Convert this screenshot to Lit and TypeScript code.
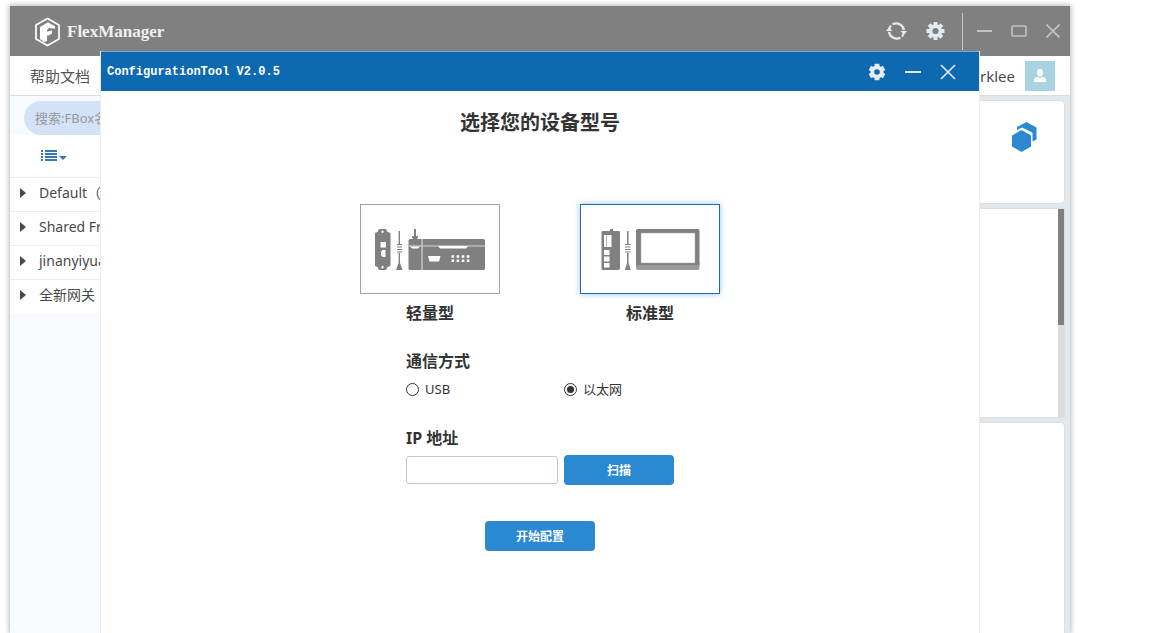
import { LitElement, html, css, svg } from "lit";
import { customElement, state } from "lit/decorators.js";

const gear = svg`<circle cx="9" cy="9" r="4.900" fill="none" stroke="currentColor" stroke-width="3.600"/>
  <path d="M9 0v4M9 14v4M0 9h4M14 9h4M2.600 2.600l2.800 2.800M12.600 12.600l2.800 2.800M2.600 15.400l2.800-2.800M12.600 5.400l2.800-2.800" stroke="currentColor" stroke-width="4"/>`;

const gearSix = svg`<circle cx="9" cy="9" r="4.700" fill="none" stroke="currentColor" stroke-width="3.800"/>
  <path d="M9 .8v3M9 14.200v3M1.900 4.900l2.600 1.500M13.500 11.600l2.600 1.500M1.900 13.100l2.600-1.500M13.500 6.400l2.600-1.500" stroke="currentColor" stroke-width="4.800"/>`;

const compactArt = html`<svg class="art" width="138" height="88" viewBox="361 205 138 88" aria-hidden="true">
  <g fill="#808080">
    <path fill-rule="evenodd" d="M379 229h7l1.500 3 3 1v33l-3 1-1.500 3h-7l-1.500-3-2.500-1v-33l2.500-1zM380.500 242v5.500h5.500V242zM382.500 250l-1.500 2v3l1.500 2h3v-7zM382.500 230.500a1.200 1.200 0 1 0 .1 0zM382.500 266a1.200 1.200 0 1 0 .1 0z"/>
    <path d="M398.600 231h1.400v13h-1.400zM398.600 253h1.400v10l2.500 7h-6.500l2.600-7zM397 244h5v1h-5zM397 246.500h5v1h-5zM397 249h5v1h-5zM397 251.500h5v1h-5z"/>
    <path d="M414 229h2v7h2v1.500l-1.500 2h-3l-1.500-2V236h2z"/>
    <rect x="408.500" y="239" width="76.500" height="31" rx="1.500"/>
  </g>
  <path d="M409 246h76M422 239v31" stroke="#d5d5d5" stroke-width="1.200"/>
  <path fill="#fff" d="M410 246.500h10l-2 2h-6zM438 246h30l-2 2.500h-26zM428 256h12.500l-1.500 5.500h-9.500z"/>
  <path d="M451.500 256.500h18M451.500 260.700h18" stroke="#fff" stroke-width="2.400" stroke-dasharray="2.600 2.500"/>
</svg>`;

const standardArt = html`<svg class="art" width="138" height="88" viewBox="581 205 138 88" aria-hidden="true">
  <path fill="#808080" d="M610 229h3v2h6a1 1 0 0 1 1 1v36a2 2 0 0 1-2 2h-15a1.500 1.500 0 0 1-1.500-1.500V232a1 1 0 0 1 1-1h7.500z"/>
  <path fill="#fff" d="M604 235h2v12h-2zM607 235h4.500v12H607zM604 250h5.500v5H604zM604 256.500h5.500v5H604zM604 263h5.500v4.500H604z"/>
  <path fill="#bbb" d="M606 235h1v12h-1z"/>
  <path fill="#858585" d="M627 231h1.600v13H627zM627 253h1.600v10l2.200 7h-6l2.200-7zM625 244h5.500v1H625zM625 246.500h5.500v1H625zM625 249h5.500v1H625zM625 251.500h5.500v1H625z"/>
  <path fill="#999" d="M636 262h63.500v6a2 2 0 0 1-2 2h-59.500a2 2 0 0 1-2-2z"/>
  <path fill="#808080" d="M638 229h59.500a2 2 0 0 1 2 2v34H636v-34a2 2 0 0 1 2-2z"/>
  <path fill="#fff" stroke="#aaa" stroke-width=".5" d="M641 233h54v30h-54z"/>
</svg>`;

@customElement("app-root")
export class AppRoot extends LitElement {
  static styles = css`
    :host {
      display: block;
      height: 100vh;
      overflow: hidden;
      background: #fff;
      color: #4a4a4a;
      font-family: "Noto Sans", "Noto Sans CJK SC", sans-serif;
    }
    * { box-sizing: border-box; }
    button { font-family: inherit; padding: 0; border: 0; background: none; color: inherit; cursor: pointer; }
    svg { display: block; }
    h1, ul, fieldset { margin: 0; padding: 0; border: 0; list-style: none; }
    .stage { height: 100%; padding: 6px 103px 0 10px; }
    .window {
      position: relative;
      display: flex;
      flex-direction: column;
      height: 100%;
      background: #fff;
      box-shadow: 0 0 5px 1px rgba(0, 0, 0, 0.28);
    }
    .titlebar {
      display: flex;
      align-items: center;
      flex: none;
      height: 50px;
      padding: 0 10px 0 24px;
      background: #808080;
      color: #fff;
    }
    .brand {
      display: flex;
      align-items: center;
      gap: 6px;
      flex: 1;
      padding-top: 1px;
      color: #f0f0f0;
      font: bold 17px "Liberation Serif", serif;
    }
    .actions { display: flex; align-items: center; gap: 19px; }
    .actions button { color: #e3eaf0; }
    .rule { width: 1px; height: 37px; margin: 0 -5px 0 -2px; background: #c5c9d0; }
    .actions .dim { color: #c0c3c5; }
    .menubar {
      display: flex;
      align-items: center;
      justify-content: space-between;
      flex: none;
      height: 40px;
      padding: 0 15px 0 20px;
      border-bottom: 1px solid #d9dbde;
      font-size: 15px;
    }
    .menubar a { color: #555; text-decoration: none; }
    .user { display: flex; align-items: center; gap: 10px; }
    .avatar { display: grid; place-items: center; width: 30px; height: 30px; background: #a9d3e2; }
    .content { display: flex; flex: 1; min-height: 0; background: #e1e8ee; }
    .sidebar { width: 220px; background: #f7fbff; }
    .search { display: flex; padding: 5px 10px 0 14px; }
    .search input {
      width: 100%;
      height: 34px;
      padding: 0 11px;
      border: 0;
      border-radius: 17px;
      background: #d4e2f8;
      font: 13px "Noto Sans", "Noto Sans CJK SC", sans-serif;
    }
    .search input::placeholder { color: #999; opacity: 1; }
    .tools { display: flex; align-items: center; height: 42px; padding-left: 31px; background: #fff; color: #337ab7; }
    .groups li {
      display: flex;
      align-items: center;
      gap: 13px;
      height: 34px;
      padding: 0 0 4px 10px;
      border-top: 1px solid #ececec;
      background: #fff;
      font-size: 14px;
      line-height: 20px;
      white-space: nowrap;
    }
    .panels { display: flex; flex-direction: column; gap: 6px; flex: 1; min-width: 0; padding: 5px 6px 0 5px; }
    .panel { border-radius: 4px; background: #fff; box-shadow: 0 0 1px 1px #dcdfe1; }
    .summary { display: flex; justify-content: flex-end; height: 102px; padding: 21px 26px; }
    .listing { display: flex; justify-content: flex-end; height: 208px; border-radius: 0; }
    .track { width: 6px; background: #dcdcdc; }
    .thumb { height: 116px; background: #808080; }
    .rest { flex: 1; border-radius: 4px 4px 0 0; }

    .dialog {
      position: absolute;
      inset: 45px 90px 0 90px;
      border: 1px solid #e9ecee;
      border-width: 0 1px;
      background: #fff;
      color: #333;
    }
    .dialog-bar {
      display: flex;
      align-items: center;
      justify-content: space-between;
      height: 40px;
      padding: 0 23px 0 6px;
      border-top: 1px solid #79a9cf;
      background: #0e6ab0;
      color: #fff;
    }
    .dialog-title { font: bold 12px "Liberation Mono", monospace; }
    .dialog-actions { display: flex; align-items: center; gap: 19px; color: #e6ebef; }
    .dialog-body { display: flex; flex-direction: column; align-items: center; padding-top: 17px; }
    h1 { font-size: 20px; line-height: 30px; font-weight: bold; }
    .models { display: flex; gap: 80px; margin-top: 66px; }
    .model { display: grid; gap: 8px; width: 140px; font-size: 16px; line-height: 22px; font-weight: bold; }
    .frame { height: 90px; border: 1px solid #a3a3a3; background: #fff; }
    .model[aria-pressed="true"] .frame { border-color: #1d6cb0; box-shadow: 0 0 6px rgba(60, 150, 225, 0.55); }
    .form { display: flex; flex-direction: column; width: 268px; margin-top: 26px; }
    .heading { display: block; padding: 0; font-size: 16px; line-height: 22px; font-weight: bold; }
    .choices { display: grid; grid-template-columns: 158px 1fr; margin-top: 7px; }
    .choice { display: flex; align-items: center; gap: 6px; font-size: 13px; line-height: 20px; }
    .choice input {
      appearance: none;
      display: grid;
      place-items: center;
      width: 13px;
      height: 13px;
      margin: 0;
      border: 1px solid #333;
      border-radius: 50%;
    }
    .choice input:checked::before { content: ""; width: 7px; height: 7px; border-radius: 50%; background: #333; }
    .address { margin-top: 28px; }
    .row { display: flex; align-items: center; gap: 6px; margin-top: 6px; }
    .row input { flex: 1; min-width: 0; height: 28px; padding: 0 6px; border: 1px solid #bccdd0; border-radius: 3px; }
    .primary {
      width: 110px;
      height: 30px;
      border-radius: 4px;
      background: #2a89d1;
      color: #fff;
      font-size: 12px;
      font-weight: bold;
    }
    .start { align-self: center; margin-top: 36px; }
  `;

  @state() private model = "standard";
  @state() private link = "ethernet";

  private renderModel(id: string, name: string, art: unknown) {
    return html`<button class="model" aria-pressed=${this.model === id} @click=${() => (this.model = id)}>
      <span class="frame">${art}</span><span>${name}</span>
    </button>`;
  }

  private renderLink(id: string, name: string) {
    return html`<label class="choice">
      <input type="radio" name="link" .checked=${this.link === id} @change=${() => (this.link = id)} />${name}
    </label>`;
  }

  render() {
    return html`<div class="stage"><div class="window">
      <header class="titlebar">
        <div class="brand">
          <svg width="27" height="30" viewBox="0 0 27 30">
            <path d="M13.500 1.500L25 8v14l-11.500 6.500L2 22V8z" fill="none" stroke="#fff" stroke-width="1.700"/>
            <path d="M6 10l8-4.800 7 4v2.600l-6-.8-2 2v1.500l5-1v3l-3.500 2H13v5.500L10 25l-4-3z" fill="#fff"/>
          </svg>
          <span>FlexManager</span>
        </div>
        <div class="actions">
          <button aria-label="刷新"><svg width="21" height="20" viewBox="0 0 21 20">
            <path d="M6.500 3.200A8 8 0 0 1 18 9M14.500 16.800A8 8 0 0 1 3 11M3 10A8 8 0 0 1 5 4.500M18 10A8 8 0 0 1 16 15.500" fill="none" stroke="currentColor" stroke-width="2.200"/>
            <path d="M0 10l3-3.500L6.500 10zM14.500 10H21l-3 3.500z" fill="currentColor"/>
          </svg></button>
          <button aria-label="设置"><svg width="19" height="18" viewBox="-.5 0 19 18">${gear}</svg></button>
          <span class="rule"></span>
          <button class="dim" aria-label="最小化"><svg width="15" height="16"><path d="M0 8h15" stroke="currentColor" stroke-width="2"/></svg></button>
          <button class="dim" aria-label="最大化"><svg width="16" height="12"><rect x="1" y="1" width="14" height="10" rx="1" fill="none" stroke="currentColor" stroke-width="1.600"/></svg></button>
          <button class="dim" aria-label="关闭"><svg width="14" height="14"><path d="M.5.5l13 13m0-13l-13 13" stroke="currentColor" stroke-width="1.600"/></svg></button>
        </div>
      </header>
      <nav class="menubar">
        <a href="#help">帮助文档</a>
        <div class="user"><span>rklee</span>
          <span class="avatar"><svg width="12" height="13" viewBox="0 0 12 13" fill="#fff"><ellipse cx="6" cy="3.600" rx="3" ry="3.600"/><path d="M0 13v-2c0-2 1.500-2.900 3.500-3.200Q6 9.500 8.500 7.800C10.500 8.100 12 9 12 11v2z"/></svg></span>
        </div>
      </nav>
      <div class="content">
        <aside class="sidebar">
          <div class="search"><input type="search" aria-label="搜索" placeholder="搜索:FBox名" /></div>
          <div class="tools"><button aria-label="列表"><svg width="26" height="12" viewBox="0 0 26 12" fill="currentColor">
            <path d="M0 0h2v2H0zM0 3h2v2H0zM0 6h2v2H0zM0 9h2v2H0zM4 0h12v2H4zM4 3h12v2H4zM4 6h12v2H4zM4 9h12v2H4z"/><path d="M18 6h8l-4 4z"/>
          </svg></button></div>
          <ul class="groups">
            ${["Default（", "Shared Fr", "jinanyiyua", "全新网关"].map(
              (name) => html`<li><svg width="6" height="10"><path d="M0 0l6 5-6 5z" fill="#4a4a4a"/></svg>${name}</li>`
            )}
          </ul>
        </aside>
        <main class="panels">
          <section class="panel summary"><svg width="27" height="31" viewBox="0 0 27 31" fill="#2a89d1">
            <path d="M6 5L15.500 0 25.500 5.500v12l-4 2V10.800L11 5.500 6 8z"/><path d="M10.500 8l9.500 5.500v11L10.500 30 1 24.500v-11z"/>
          </svg></section>
          <section class="panel listing"><div class="track"><div class="thumb"></div></div></section>
          <section class="panel rest"></section>
        </main>
      </div>

      <div class="dialog" role="dialog" aria-labelledby="dialog-title">
        <header class="dialog-bar">
          <span class="dialog-title" id="dialog-title">ConfigurationTool V2.0.5</span>
          <div class="dialog-actions">
            <button aria-label="设置"><svg width="18" height="18" viewBox="0 0 18 18">${gearSix}</svg></button>
            <button aria-label="最小化"><svg width="16" height="16"><path d="M0 8h16" stroke="currentColor" stroke-width="2"/></svg></button>
            <button aria-label="关闭"><svg width="16" height="16"><path d="M1 1l14 14m0-14L1 15" stroke="currentColor" stroke-width="1.600"/></svg></button>
          </div>
        </header>
        <div class="dialog-body">
          <h1>选择您的设备型号</h1>
          <div class="models">
            ${this.renderModel("compact", "轻量型", compactArt)}
            ${this.renderModel("standard", "标准型", standardArt)}
          </div>
          <div class="form">
            <fieldset>
              <legend class="heading">通信方式</legend>
              <div class="choices">${this.renderLink("usb", "USB")}${this.renderLink("ethernet", "以太网")}</div>
            </fieldset>
            <div class="address">
              <label class="heading" for="ip">IP 地址</label>
              <div class="row"><input id="ip" type="text" /><button class="primary">扫描</button></div>
            </div>
            <button class="primary start">开始配置</button>
          </div>
        </div>
      </div>
    </div></div>`;
  }
}
